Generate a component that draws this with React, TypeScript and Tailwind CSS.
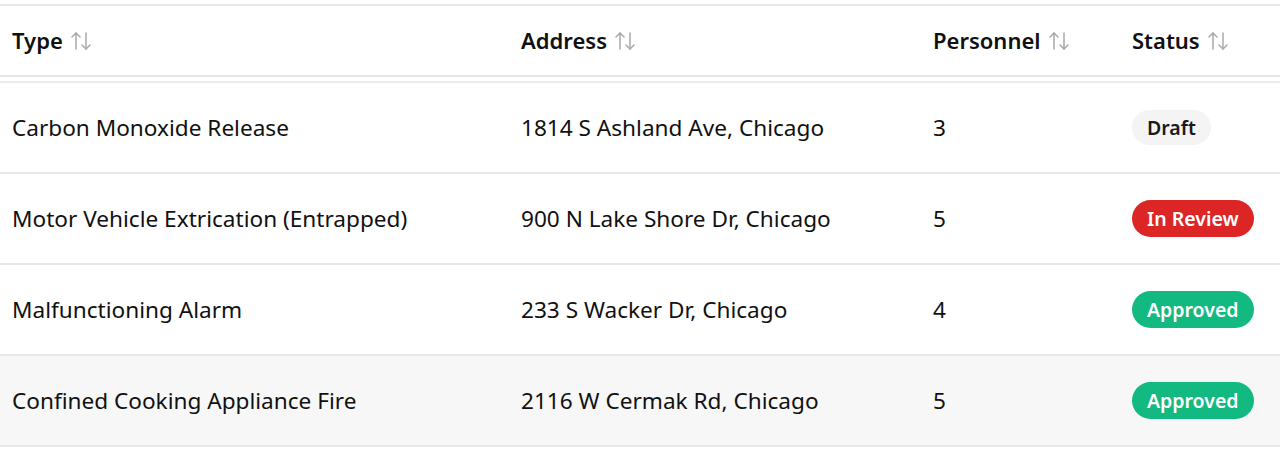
import React from "react";
import { ArrowUpDown } from "lucide-react";

type Row = { type: string; address: string; personnel: number; status: "Draft" | "In Review" | "Approved" };

const rows: Row[] = [
  { type: "Carbon Monoxide Release", address: "1814 S Ashland Ave, Chicago", personnel: 3, status: "Draft" },
  { type: "Motor Vehicle Extrication (Entrapped)", address: "900 N Lake Shore Dr, Chicago", personnel: 5, status: "In Review" },
  { type: "Malfunctioning Alarm", address: "233 S Wacker Dr, Chicago", personnel: 4, status: "Approved" },
  { type: "Confined Cooking Appliance Fire", address: "2116 W Cermak Rd, Chicago", personnel: 5, status: "Approved" },
];

function Badge({ status }: { status: Row["status"] }) {
  if (status === "Draft")
    return <span className="inline-flex h-[35px] items-center rounded-full bg-[#f4f4f4] px-[15px] text-[19.5px] font-semibold text-[#1a1a1a]">Draft</span>;
  if (status === "In Review")
    return <span className="inline-flex h-[37px] items-center rounded-full bg-[#dc2626] px-[15px] text-[19.5px] font-semibold text-white">In Review</span>;
  return <span className="inline-flex h-[37px] items-center rounded-full bg-[#12b981] px-[15px] text-[19.5px] font-semibold text-white">Approved</span>;
}

function Head({ label }: { label: string }) {
  return (
    <div className="flex items-center gap-[6px] px-3 text-[22px] font-semibold text-[#111]">
      <span>{label}</span>
      <ArrowUpDown size={24} strokeWidth={1.5} className="text-[#a8a8a8]" />
    </div>
  );
}

const cols = "grid grid-cols-[509px_412px_199px_1fr]";

export default function App() {
  return (
    <div className="bg-white pt-1" style={{ fontFamily: '"Noto Sans", "Open Sans", sans-serif' }}>
      <div className="border-t-2 border-[#e8e8e8]">
        <div className={`${cols} h-[71px] items-center border-b-2 border-[#e8e8e8]`}>
          <Head label="Type" />
          <Head label="Address" />
          <Head label="Personnel" />
          <Head label="Status" />
        </div>
        <div className="h-[4px]" />
        <div className="border-t-2 border-[#ececec]">
          {rows.map((r, i) => (
            <div
              key={i}
              className={`${cols} h-[91px] items-center border-b-2 border-[#e8e8e8] text-[22.6px] text-[#111] ${i === 3 ? "bg-[#f7f7f7]" : ""}`}
            >
              <div className="px-3">{r.type}</div>
              <div className="px-3">{r.address}</div>
              <div className="px-3">{r.personnel}</div>
              <div className="px-3">
                <Badge status={r.status} />
              </div>
            </div>
          ))}
        </div>
      </div>
    </div>
  );
}
